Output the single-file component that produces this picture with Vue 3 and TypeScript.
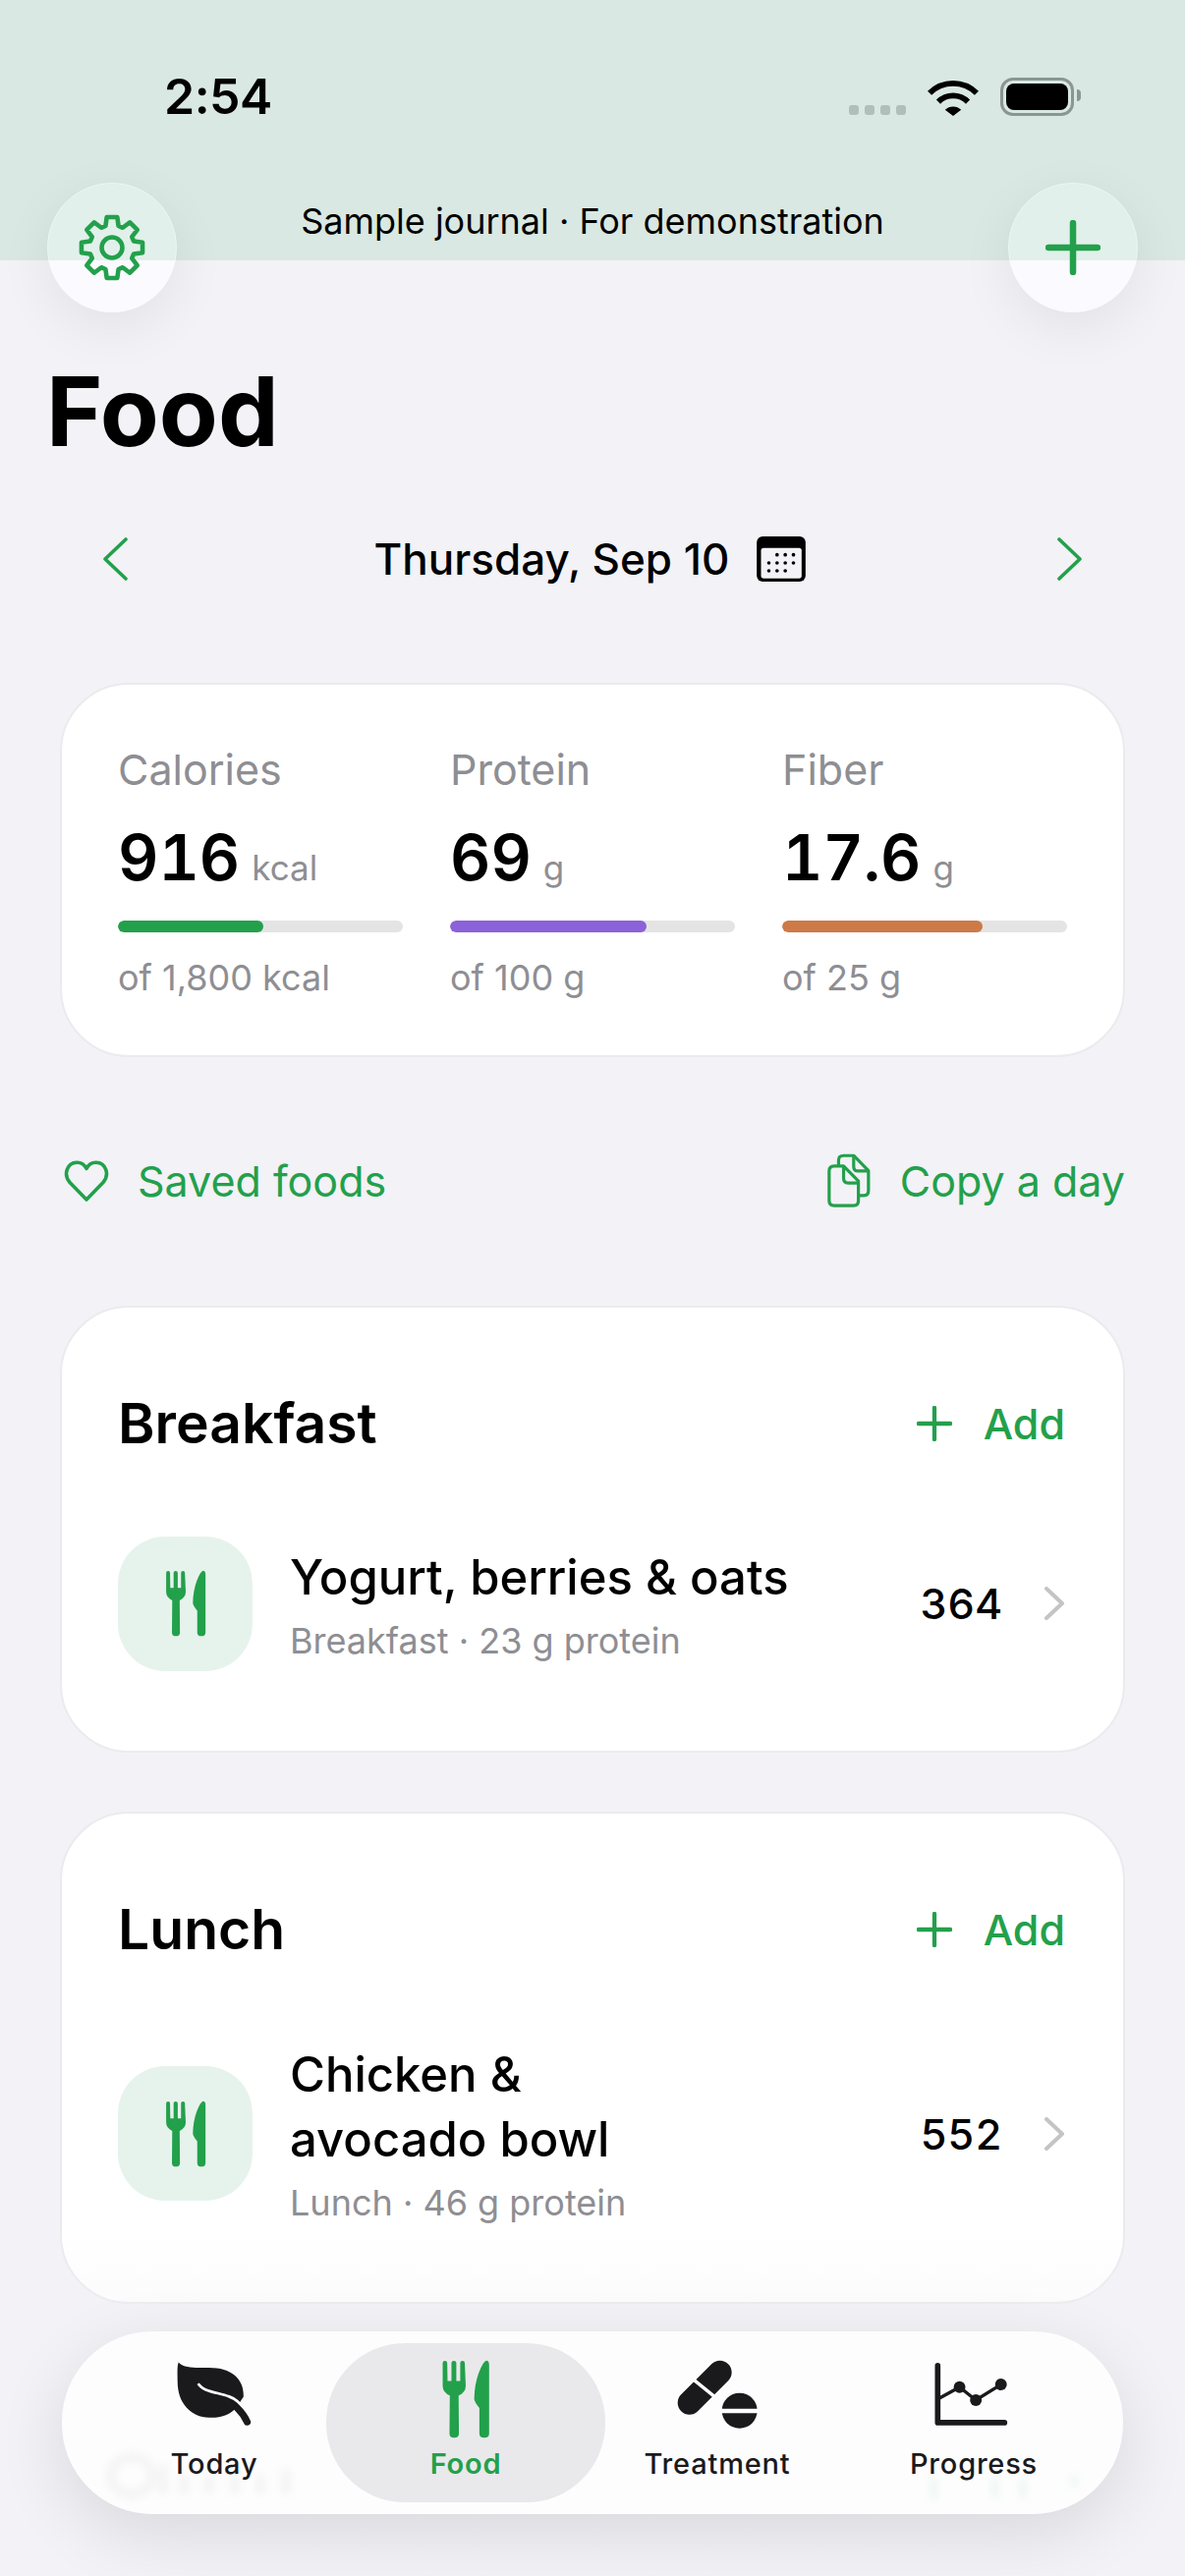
<template>
  <div class="page">
    <header class="band">
      <div class="status">
        <span class="clock">2:54</span>
        <div class="status-icons">
          <div class="signal"><i v-for="n in 4" :key="n"></i></div>
          <svg class="wifi" viewBox="315 87 152 111">
            <path d="M321 130A99 99 0 0 1 461 130" fill="none" stroke="currentColor" stroke-width="17" />
            <path d="M347 156A62 62 0 0 1 435 156" fill="none" stroke="currentColor" stroke-width="17" />
            <path d="M367 180A34 34 0 0 1 415 180L391 198Z" fill="currentColor" />
          </svg>
          <div class="battery"><b></b></div>
        </div>
      </div>
      <p class="banner">Sample journal · For demonstration</p>
    </header>

    <button class="round-btn gear-btn" type="button" aria-label="Settings">
      <svg width="72" height="72" viewBox="-36 -36 72 72" fill="none" stroke="currentColor" stroke-width="4.6" stroke-linejoin="round">
        <path :d="gearPath" />
        <circle r="10.5" />
      </svg>
    </button>
    <button class="round-btn plus-btn" type="button" aria-label="Add">
      <svg width="56" height="56" viewBox="0 0 56 56" fill="none" stroke="currentColor" stroke-width="6.5" stroke-linecap="round">
        <path d="M28 3V53M3 28H53" />
      </svg>
    </button>

    <main class="content">
      <h1 class="title">Food</h1>

      <div class="date-row">
        <svg class="chev" width="26" height="44" viewBox="0 0 26 44"><path d="M24 2L3 22L24 42" /></svg>
        <div class="date">
          <span>Thursday, Sep 10</span>
          <svg width="50" height="46" viewBox="93 50 149 138">
            <rect x="93" y="50" width="149" height="138" rx="18" fill="#000" />
            <rect x="106" y="85" width="124" height="93" rx="8" fill="#f2f2f7" />
            <circle v-for="d in calendarDots" :key="d.join()" :cx="d[0]" :cy="d[1]" r="5.5" fill="#000" />
          </svg>
        </div>
        <svg class="chev" width="26" height="44" viewBox="0 0 26 44"><path d="M2 2L23 22L2 42" /></svg>
      </div>

      <section class="card stats">
        <div v-for="s in stats" :key="s.label" class="stat">
          <div class="stat-label">{{ s.label }}</div>
          <div class="stat-value">{{ s.value }}<small>{{ s.unit }}</small></div>
          <div class="track"><div class="fill" :style="{ width: s.pct + '%', background: s.color }"></div></div>
          <div class="stat-goal">{{ s.goal }}</div>
        </div>
      </section>

      <div class="links">
        <a class="link">
          <svg width="46" height="43" viewBox="0 0 46 43" fill="none" stroke="currentColor" stroke-width="3.6" stroke-linejoin="round">
            <path d="M23 40L6 22.5C-1 14 3.5 2.5 13 2.2C18 2 21 4.5 23 8.5C25 4.5 28 2 33 2.2C42.500 2.500 47 14 40 22.500Z" />
          </svg>
          <span class="saved">Saved foods</span>
        </a>
        <a class="link">
          <svg width="48" height="60" viewBox="60 65 150 185" fill="none" stroke="currentColor" stroke-width="10" stroke-linejoin="round">
            <path d="M88 110H118L165 158V220Q165 236 150 236H88Q72 236 72 220V126Q72 110 88 110Z" />
            <path d="M118 110V150Q118 164 132 164H165" />
            <path d="M102 108V92Q102 77 118 77H150L197 125V188Q197 204 182 204H165" />
            <path d="M150 77V112Q150 126 164 126H197" />
          </svg>
          <span class="copy">Copy a day</span>
        </a>
      </div>

      <section v-for="m in meals" :key="m.name" class="card meal">
        <div class="meal-head">
          <h2>{{ m.name }}</h2>
          <span class="add">
            <svg width="36" height="36" viewBox="0 0 38 38" fill="none" stroke="currentColor" stroke-width="4.500" stroke-linecap="round">
              <path d="M19 2V36M2 19H36" />
            </svg>
            Add
          </span>
        </div>
        <div class="meal-row">
          <div class="food-icon">
            <svg width="42" height="68" viewBox="1050 65 150 242" fill="currentColor">
              <path :d="forkPath" />
              <path :d="knifePath" />
            </svg>
          </div>
          <div class="food-copy">
            <div class="food-name">{{ m.food }}</div>
            <div class="food-sub">{{ m.detail }}</div>
          </div>
          <span class="food-cal">{{ m.cal }}</span>
          <svg class="food-chev" width="22" height="34" viewBox="0 0 22 34"><path d="M3 2L19 17L3 32" /></svg>
        </div>
      </section>

      <section class="card meal next-meal"></section>
    </main>

    <div class="fade"></div>

    <nav class="tabbar">
      <!-- soft smear of the card passing under the glass -->
      <svg class="smear" width="1080" height="186" viewBox="0 0 1080 186" fill="none">
        <g opacity="0.04" stroke="#000" stroke-width="9">
          <ellipse cx="71" cy="147" rx="21" ry="19" />
          <path d="M103 136V166M124 146V166M150 146V166M176 146V166M202 146V166M228 140V166" />
        </g>
        <g opacity="0.09" stroke="#23a04b" stroke-width="6">
          <path d="M887 148V172M950 148V170M978 150V170M1030 146V158" />
        </g>
      </svg>
      <div v-for="t in tabs" :key="t.label" class="tab" :class="{ active: t.active }">
        <svg v-if="t.label === 'Today'" width="78" height="68" viewBox="235 95 230 200" fill="currentColor">
          <path d="M243 102C262 122 300 118 335 118C400 118 440 150 438 205L415 240C395 262 365 270 335 268C280 266 240 225 240 160C240 135 238 115 243 102Z" />
          <path d="M302 166C315 190 360 192 395 205C415 212 428 222 441 246" fill="none" stroke="#fdfdfe" stroke-width="8" />
          <path d="M418 238C432 252 444 270 449 281" fill="none" stroke="currentColor" stroke-width="21" stroke-linecap="round" />
        </svg>
        <svg v-else-if="t.label === 'Food'" width="50" height="80" viewBox="1050 65 150 242" fill="currentColor">
          <path :d="forkPath" />
          <path :d="knifePath" />
        </svg>
        <svg v-else-if="t.label === 'Treatment'" width="82" height="70" viewBox="208 90 244 210">
          <path d="M245 221L338 128" fill="none" stroke="currentColor" stroke-width="72" stroke-linecap="round" />
          <path d="M252 146L326 206" fill="none" stroke="#fdfdfe" stroke-width="10" />
          <circle cx="398" cy="245" r="54" fill="currentColor" />
          <path d="M340 246H456" stroke="#fdfdfe" stroke-width="13" />
        </svg>
        <svg v-else width="78" height="70" viewBox="985 90 235 210" fill="none" stroke="currentColor">
          <path d="M1001 107V282H1206" stroke-width="17" stroke-linecap="round" stroke-linejoin="round" />
          <path d="M1005 208L1068 173L1118 213L1195 165" stroke-width="10" />
          <circle cx="1068" cy="173" r="18" fill="currentColor" stroke="none" />
          <circle cx="1118" cy="213" r="18" fill="currentColor" stroke="none" />
          <circle cx="1195" cy="165" r="18" fill="currentColor" stroke="none" />
        </svg>
        <span>{{ t.label }}</span>
      </div>
    </nav>
  </div>
</template>

<script setup lang="ts">
interface Stat {
  label: string
  value: string
  unit: string
  goal: string
  pct: number
  color: string
}

const stats: Stat[] = [
  { label: 'Calories', value: '916', unit: 'kcal', goal: 'of 1,800 kcal', pct: 50.9, color: '#23a04b' },
  { label: 'Protein', value: '69', unit: 'g', goal: 'of 100 g', pct: 69, color: '#8b62d8' },
  { label: 'Fiber', value: '17.6', unit: 'g', goal: 'of 25 g', pct: 70.4, color: '#cd7a47' },
]

const meals = [
  { name: 'Breakfast', food: 'Yogurt, berries & oats', detail: 'Breakfast · 23 g protein', cal: 364 },
  { name: 'Lunch', food: 'Chicken &\navocado bowl', detail: 'Lunch · 46 g protein', cal: 552 },
]

const tabs = [
  { label: 'Today', active: false },
  { label: 'Food', active: true },
  { label: 'Treatment', active: false },
  { label: 'Progress', active: false },
]

const calendarDots = [
  [155, 106], [180, 106], [205, 106],
  [130, 131], [155, 131], [180, 131], [205, 131],
  [130, 155], [155, 155], [180, 155],
]

const forkPath =
  'M1054 74Q1054 68 1061 68Q1068 68 1068 74L1069 130H1081V74Q1081 68 1088 68Q1096 68 1096 74V130H1108V74Q1108 68 1115 68Q1122 68 1122 74L1125 145Q1125 165 1103 175L1104 292Q1104 305 1089 305Q1075 305 1075 292L1076 175Q1054 165 1054 145Z'
const knifePath =
  'M1197 80Q1197 67 1188 67Q1178 70 1165 105Q1152 140 1151 185Q1152 195 1167 213V292Q1167 305 1182 305Q1197 305 1197 292Z'

// eight-tooth cog outline, teeth straight up/down and at the diagonals
function buildGear(teeth: number, outer: number, root: number): string {
  const pts: string[] = []
  const step = (Math.PI * 2) / teeth
  for (let i = 0; i < teeth; i++) {
    const a = i * step - Math.PI / 2
    const at = (r: number, t: number) => `${(r * Math.cos(t)).toFixed(2)} ${(r * Math.sin(t)).toFixed(2)}`
    pts.push(at(root, a - 0.29), at(outer, a - 0.17), at(outer, a + 0.17), at(root, a + 0.29))
  }
  return 'M' + pts.join('L') + 'Z'
}

const gearPath = buildGear(8, 31.5, 23)
</script>

<style>
html,
body {
  margin: 0;
  background: #f2f2f7;
}
</style>

<style scoped>
.page {
  position: relative;
  width: 1206px;
  height: 2622px;
  overflow: hidden;
  background: #f2f2f7;
  color: #000;
  font-family: Inter, 'Noto Sans', sans-serif;
}

.band {
  height: 265px;
  background: #d9e8e2;
  box-sizing: border-box;
}

.status {
  display: flex;
  justify-content: space-between;
  align-items: center;
  height: 40px;
  padding: 78px 113px 0 167px;
}

.clock {
  font-size: 50px;
  font-weight: 600;
  letter-spacing: -0.5px;
  line-height: 40px;
}

.status-icons {
  display: flex;
  align-items: flex-end;
  height: 40px;
}

.signal {
  display: flex;
  gap: 6px;
  margin-right: 22px;
  margin-bottom: 1px;
}

.signal i {
  width: 10px;
  height: 10px;
  border-radius: 3px;
  background: #b0bfb9;
}

.wifi {
  width: 52px;
  height: 38px;
  margin-right: 22px;
  color: #000;
}

.battery {
  position: relative;
  box-sizing: border-box;
  width: 75px;
  height: 39px;
  padding: 3px;
  border: 3px solid #8a9691;
  border-radius: 13px;
}

.battery b {
  display: block;
  height: 100%;
  border-radius: 8px;
  background: #000;
}

.battery::after {
  content: '';
  position: absolute;
  right: -10px;
  top: 9px;
  width: 4px;
  height: 12px;
  border-radius: 0 4px 4px 0;
  background: #8a9691;
}

.banner {
  margin: 0;
  padding-top: 85px;
  text-align: center;
  font-size: 36px;
  line-height: 44px;
  color: #000;
}

.round-btn {
  position: absolute;
  top: 186px;
  display: flex;
  align-items: center;
  justify-content: center;
  width: 132px;
  height: 132px;
  padding: 0;
  border: 1px solid rgba(255, 255, 255, 0.35);
  border-radius: 50%;
  background: transparent;
  color: #23a04b;
  backdrop-filter: brightness(1.035);
  box-shadow: 0 16px 56px rgba(0, 0, 0, 0.07);
}

.gear-btn {
  left: 48px;
}

.plus-btn {
  left: 1026px;
}

.content {
  padding: 0 61px;
}

.title {
  margin: 99px 0 0 -14px;
  font-size: 98px;
  font-weight: 700;
  line-height: 110px;
}

.date-row {
  display: flex;
  align-items: center;
  justify-content: space-between;
  height: 60px;
  margin: 65px -43px 0;
  padding: 0 86px;
}

.chev {
  fill: none;
  stroke: #23a04b;
  stroke-width: 3.6;
  stroke-linecap: round;
  stroke-linejoin: round;
}

.date {
  display: flex;
  align-items: center;
  gap: 28px;
  margin-right: 5px;
  font-size: 44px;
  font-weight: 500;
}

.card {
  box-sizing: border-box;
  border: 2px solid #ebebef;
  border-radius: 70px;
  background: #fff;
}

.stats {
  display: grid;
  grid-template-columns: repeat(3, 290px);
  column-gap: 48px;
  height: 381px;
  margin-top: 96px;
  padding: 61px 0 0 57px;
}

.stat-label {
  font-size: 43px;
  line-height: 50px;
  color: #8e8e93;
}

.stat-value {
  height: 70px;
  margin-top: 30px;
  font-size: 64px;
  font-weight: 600;
  line-height: 70px;
  font-variant-numeric: tabular-nums;
}

.stat-value small {
  margin-left: 12px;
  font-size: 35px;
  font-weight: 400;
  line-height: 1;
  color: #8e8e93;
}

.track {
  height: 12px;
  margin-top: 29px;
  border-radius: 6px;
  background: #e4e4e5;
  overflow: hidden;
}

.fill {
  height: 100%;
  border-radius: 6px;
}

.stat-goal {
  margin-top: 24px;
  font-size: 36px;
  line-height: 44px;
  color: #8e8e93;
}

.links {
  display: flex;
  justify-content: space-between;
  align-items: center;
  height: 60px;
  margin-top: 96px;
  color: #23a04b;
  font-size: 43px;
}

.link {
  display: flex;
  align-items: center;
}

.saved {
  margin-left: 29px;
}

.copy {
  margin-left: 28px;
}

.link:first-child {
  margin-left: 4px;
}

.meal {
  padding: 80px 59px 79px 57px;
  margin-top: 60px;
}

.links + .meal {
  margin-top: 97px;
}

.meal-head {
  display: flex;
  justify-content: space-between;
  align-items: center;
  height: 76px;
}

.meal-head h2 {
  margin: 0;
  font-size: 57px;
  font-weight: 600;
  line-height: 76px;
}

.add {
  display: flex;
  align-items: center;
  gap: 32px;
  font-size: 43px;
  font-weight: 500;
  color: #23a04b;
}

.meal-row {
  display: flex;
  align-items: center;
  min-height: 142px;
  margin-top: 74px;
}

.meal + .meal .meal-row {
  margin-top: 77px;
}

.food-icon {
  flex: none;
  display: flex;
  align-items: center;
  justify-content: center;
  width: 137px;
  height: 137px;
  border-radius: 48px;
  background: #e6f3ec;
  color: #23a04b;
}

.food-copy {
  margin-left: 38px;
}

.food-name {
  font-size: 49px;
  font-weight: 500;
  line-height: 66px;
  white-space: pre-line;
}

.food-sub {
  margin-top: 9px;
  font-size: 36px;
  line-height: 44px;
  color: #8e8e93;
}

.food-cal {
  margin-left: auto;
  font-size: 43px;
  font-weight: 500;
  font-variant-numeric: tabular-nums;
}

.food-chev {
  flex: none;
  margin-left: 42px;
  fill: none;
  stroke: #c4c4c7;
  stroke-width: 4;
  stroke-linecap: round;
  stroke-linejoin: round;
}

.next-meal {
  height: 420px;
}

.fade {
  position: absolute;
  left: 0;
  right: 0;
  top: 2270px;
  bottom: 0;
  background: linear-gradient(180deg, rgba(242, 242, 247, 0) 0%, rgba(242, 242, 247, 0.35) 30%, rgba(242, 242, 247, 0.96) 55%);
  pointer-events: none;
}

.tabbar {
  position: absolute;
  left: 63px;
  top: 2373px;
  display: grid;
  grid-template-columns: repeat(3, 256px) 266px;
  box-sizing: border-box;
  width: 1080px;
  height: 186px;
  padding: 12px 0 12px 27px;
  border-radius: 92px;
  background: #fdfdfe;
  box-shadow: 0 20px 70px rgba(0, 0, 0, 0.11);
  overflow: hidden;
}

.smear {
  position: absolute;
  left: 0;
  top: 0;
  filter: blur(4px);
}

.tab {
  position: relative;
  display: flex;
  flex-direction: column;
  align-items: center;
  color: #1a1a1c;
  font-size: 29px;
  font-weight: 500;
  letter-spacing: 0.8px;
}

.tab svg {
  flex: none;
  margin-top: 17px;
}

.tab:last-of-type svg {
  margin-left: -6px;
}

.tab span {
  position: absolute;
  top: 103px;
  line-height: 40px;
}

.tab.active {
  color: #23a04b;
  font-weight: 600;
}

.tab.active::before {
  content: '';
  position: absolute;
  inset: 0 -14px;
  border-radius: 80px;
  background: #e9e9eb;
}

.tab.active svg,
.tab.active span {
  z-index: 1;
}
</style>
